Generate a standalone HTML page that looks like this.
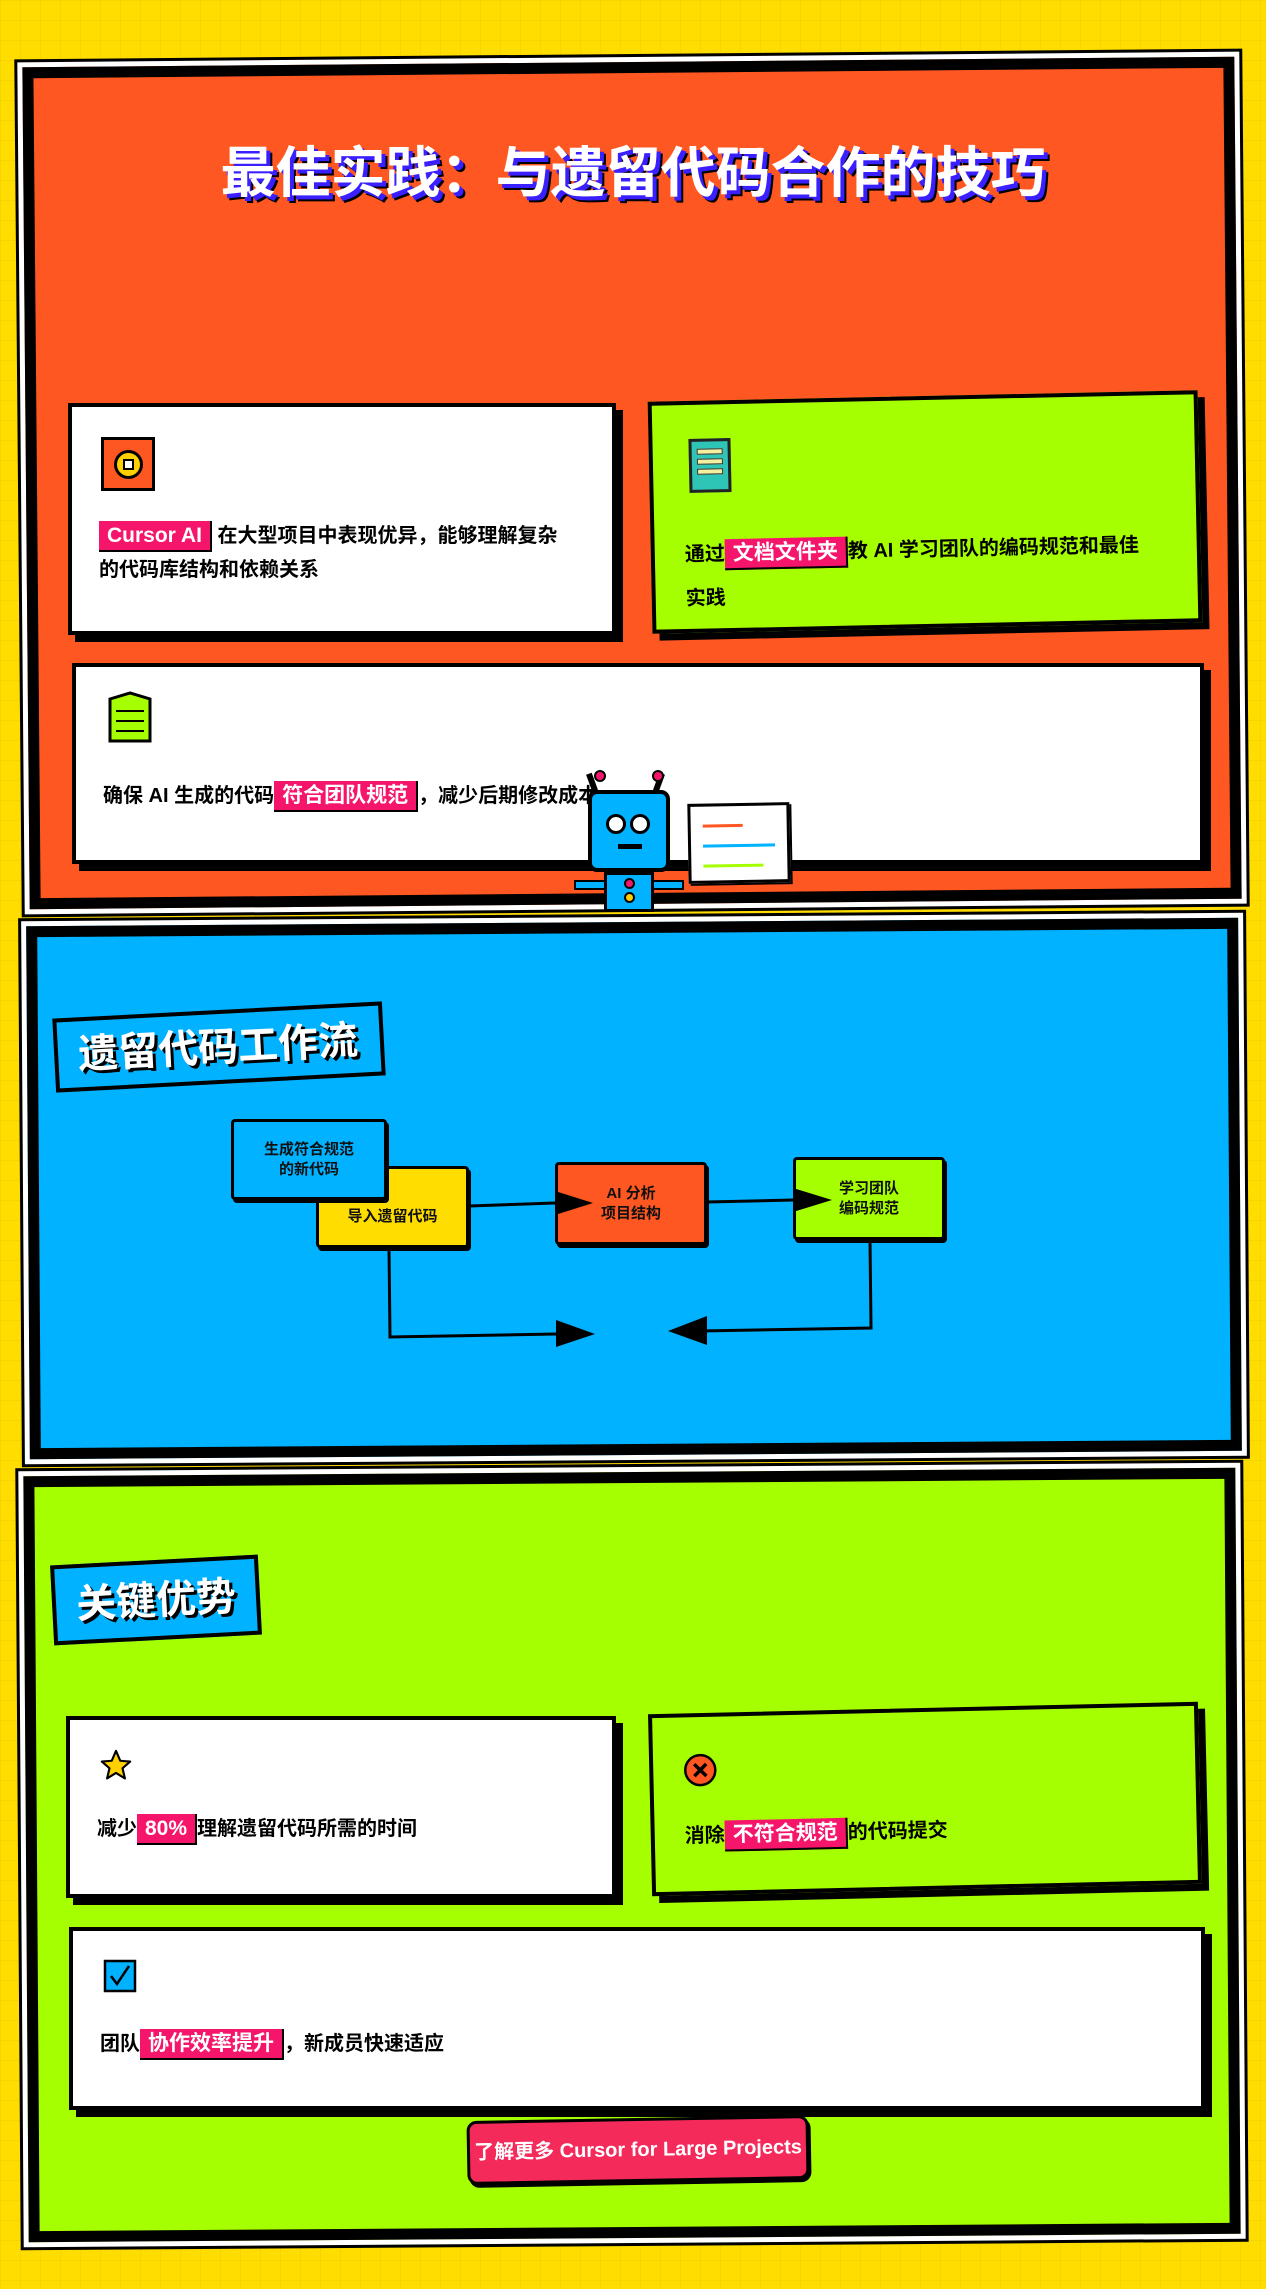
<!DOCTYPE html>
<html><head><meta charset="utf-8"><style>
*{margin:0;padding:0;box-sizing:border-box}
body{width:1266px;height:2289px;position:relative;overflow:hidden;background:#FFDD00;
background-image:linear-gradient(rgba(0,0,0,0.03) 1px,transparent 1px),linear-gradient(90deg,rgba(0,0,0,0.03) 1px,transparent 1px);background-size:20px 20px;
font-family:"Liberation Sans","Noto Sans CJK SC",sans-serif;font-weight:bold;color:#111}
.sec{position:absolute;border:11px solid #000;box-shadow:0 0 0 5px #fff,0 0 0 8px #000}
.card{position:absolute;border:4px solid #000;box-shadow:7px 7px 0 #000;background:#fff}
.txt{position:absolute;font-size:20px;line-height:34px;color:#000}
.hl{background:#F5166B;color:#fff;padding:3px 8px;border:2px solid #000;border-width:0 2px 2px 0;font-size:21px}
.h2{position:absolute;border:4px solid #000;background:#00B2FF;color:#fff;font-size:38px;text-shadow:3px 3px 0 #000;padding:0 20px}
.fb{position:absolute;border:3px solid #000;border-radius:4px;box-shadow:2px 3px 0 #000;font-size:15px;text-align:center;display:flex;align-items:center;justify-content:center;line-height:20px}
</style></head><body>

<!-- Section 1 -->
<div class="sec" style="left:26px;top:62px;width:1212px;height:842px;background:#FF5722;transform:rotate(-0.5deg)"></div>
<div style="position:absolute;left:0;width:1266px;top:128px;text-align:center;font-size:55px;color:#fff;text-shadow:4px 4px 0 #3b20ff,6px 6px 0 #000">最佳实践：与遗留代码合作的技巧</div>

<div class="card" style="left:68px;top:403px;width:548px;height:232px">
  <div style="position:absolute;left:29px;top:30px;width:54px;height:54px;border:3px solid #000;background:#FF5722"><div style="position:absolute;left:10px;top:10px;width:29px;height:29px;border-radius:50%;border:3px solid #000;background:#FFD000"><div style="position:absolute;left:6px;top:6px;width:11px;height:11px;border:2px solid #000;background:#fff"></div></div></div>
  <div class="txt" style="left:27px;top:112px;width:472px"><span class="hl">Cursor AI</span> 在大型项目中表现优异，能够理解复杂的代码库结构和依赖关系</div>
</div>

<div class="card" style="left:650px;top:396px;width:550px;height:232px;background:#A6FF00;transform:rotate(-1.2deg)">
  <div style="position:absolute;left:36px;top:34px;width:42px;height:54px;border:3px solid #222;background:#2EC4B6"><div style="margin:7px 5px 0;height:6px;background:#f5f0a0;border:1px solid #333"></div><div style="margin:4px 5px 0;height:6px;background:#f5f0a0;border:1px solid #333"></div><div style="margin:4px 5px 0;height:6px;background:#f5f0a0;border:1px solid #333"></div></div>
  <div class="txt" style="left:30px;top:128px;width:470px;line-height:44px">通过<span class="hl">文档文件夹</span>教 AI 学习团队的编码规范和最佳实践</div>
</div>

<div class="card" style="left:72px;top:663px;width:1132px;height:201px">
  <svg style="position:absolute;left:32px;top:24px" width="44" height="52" viewBox="0 0 44 52"><path d="M2 8 L22 2 L42 8 L42 50 L2 50 Z" fill="#A6FF00" stroke="#000" stroke-width="3"/><path d="M8 20H36M8 30H36M8 40H36" stroke="#000" stroke-width="2"/></svg>
  <div class="txt" style="left:27px;top:112px;width:900px">确保 AI 生成的代码<span class="hl">符合团队规范</span>，减少后期修改成本</div>
</div>

<!-- robot -->
<div style="position:absolute;left:590px;top:773px;width:6px;height:24px;background:#000;transform:rotate(-20deg)"></div>
<div style="position:absolute;left:655px;top:773px;width:6px;height:24px;background:#000;transform:rotate(20deg)"></div>
<div style="position:absolute;left:594px;top:770px;width:12px;height:12px;border-radius:50%;background:#F5166B;border:2px solid #000"></div>
<div style="position:absolute;left:652px;top:770px;width:12px;height:12px;border-radius:50%;background:#F5166B;border:2px solid #000"></div>
<div style="position:absolute;left:588px;top:790px;width:82px;height:82px;background:#00B2FF;border:4px solid #000;border-radius:9px">
  <div style="position:absolute;left:14px;top:20px;width:20px;height:20px;border:3px solid #000;border-radius:50%;background:#fff"></div>
  <div style="position:absolute;left:38px;top:20px;width:20px;height:20px;border:3px solid #000;border-radius:50%;background:#fff"></div>
  <div style="position:absolute;left:26px;top:50px;width:24px;height:5px;background:#000"></div>
</div>
<div style="position:absolute;left:574px;top:880px;width:110px;height:10px;background:#00B2FF;border:2px solid #000"></div>
<div style="position:absolute;left:604px;top:872px;width:50px;height:40px;background:#00B2FF;border:3px solid #000"><div style="margin:3px auto 0;width:11px;height:11px;border-radius:50%;background:#F5166B;border:2px solid #000"></div><div style="margin:3px auto 0;width:11px;height:11px;border-radius:50%;background:#FFD000;border:2px solid #000"></div></div>
<div style="position:absolute;left:688px;top:803px;width:102px;height:80px;background:#fff;border:3px solid #000;transform:rotate(-1deg);box-shadow:2px 2px 0 #000">
  <div style="position:absolute;left:12px;top:18px;width:40px;height:3px;background:#FF5722"></div>
  <div style="position:absolute;left:12px;top:38px;width:72px;height:3px;background:#00B2FF"></div>
  <div style="position:absolute;left:12px;top:58px;width:60px;height:3px;background:#A6FF00"></div>
</div>

<!-- Section 2 -->
<div class="sec" style="left:28px;top:922px;width:1212px;height:533px;background:#00B2FF;transform:rotate(-0.4deg)"></div>
<div class="h2" style="left:54px;top:1010px;width:330px;height:74px;line-height:68px;transform:rotate(-3deg);font-size:40px">遗留代码工作流</div>

<div class="fb" style="left:316px;top:1166px;width:153px;height:82px;background:#FFDD00;padding-top:20px">导入遗留代码</div>
<div class="fb" style="left:231px;top:1119px;width:156px;height:81px;background:#00B2FF">生成符合规范<br>的新代码</div>
<div class="fb" style="left:555px;top:1162px;width:152px;height:83px;background:#FF5722">AI 分析<br>项目结构</div>
<div class="fb" style="left:793px;top:1157px;width:152px;height:83px;background:#A6FF00">学习团队<br>编码规范</div>
<svg style="position:absolute;left:0;top:0" width="1266" height="2289">
  <g stroke="#000" stroke-width="3" fill="none">
    <path d="M469 1206 L555 1203"/><path d="M707 1202 L793 1200"/>
    <path d="M389 1248 L390 1337 L556 1334"/><path d="M870 1240 L871 1328 L700 1331"/>
  </g>
  <g fill="#000">
    <path d="M555 1191 L593 1203 L555 1215 Z"/><path d="M793 1188 L832 1200 L793 1212 Z"/>
    <path d="M556 1320 L595 1334 L556 1347 Z"/><path d="M707 1316 L668 1331 L707 1345 Z"/>
  </g>
</svg>

<!-- Section 3 -->
<div class="sec" style="left:26px;top:1472px;width:1212px;height:766px;background:#A6FF00;transform:rotate(-0.4deg)"></div>
<div class="h2" style="left:52px;top:1560px;width:208px;height:80px;line-height:74px;transform:rotate(-3deg);font-size:40px">关键优势</div>

<div class="card" style="left:66px;top:1716px;width:550px;height:182px">
  <svg style="position:absolute;left:29px;top:28px" width="34" height="34" viewBox="0 0 24 24"><path d="M12 2l3 7 7 .6-5.4 4.7 1.7 7.2L12 17.6 5.7 21.5l1.7-7.2L2 9.6 9 9z" fill="#FFD000" stroke="#000" stroke-width="1.5" stroke-linejoin="round"/></svg>
  <div class="txt" style="left:27px;top:92px">减少<span class="hl">80%</span>理解遗留代码所需的时间</div>
</div>
<div class="card" style="left:650px;top:1708px;width:550px;height:182px;background:#A6FF00;transform:rotate(-1.3deg)">
  <svg style="position:absolute;left:30px;top:36px" width="34" height="34" viewBox="0 0 34 34"><circle cx="17" cy="17" r="15" fill="#FF5722" stroke="#000" stroke-width="2.5"/><path d="M11 11L23 23M23 11L11 23" stroke="#000" stroke-width="3.5"/></svg>
  <div class="txt" style="left:30px;top:102px">消除<span class="hl">不符合规范</span>的代码提交</div>
</div>
<div class="card" style="left:69px;top:1927px;width:1136px;height:183px">
  <svg style="position:absolute;left:30px;top:28px" width="34" height="34" viewBox="0 0 34 34"><rect x="2" y="2" width="30" height="30" fill="#00B2FF" stroke="#000" stroke-width="2.5"/><path d="M8 17L14 25L26 7" stroke="#000" stroke-width="2.5" fill="none"/></svg>
  <div class="txt" style="left:27px;top:96px">团队<span class="hl">协作效率提升</span>，新成员快速适应</div>
</div>

<div style="position:absolute;left:467px;top:2118px;width:342px;height:64px;background:#F42A5B;border:3px solid #000;border-radius:10px;box-shadow:2px 3px 0 #000;color:#fff;font-size:20px;line-height:58px;text-align:center;transform:rotate(-1deg)">了解更多 Cursor for Large Projects</div>
</body></html>
